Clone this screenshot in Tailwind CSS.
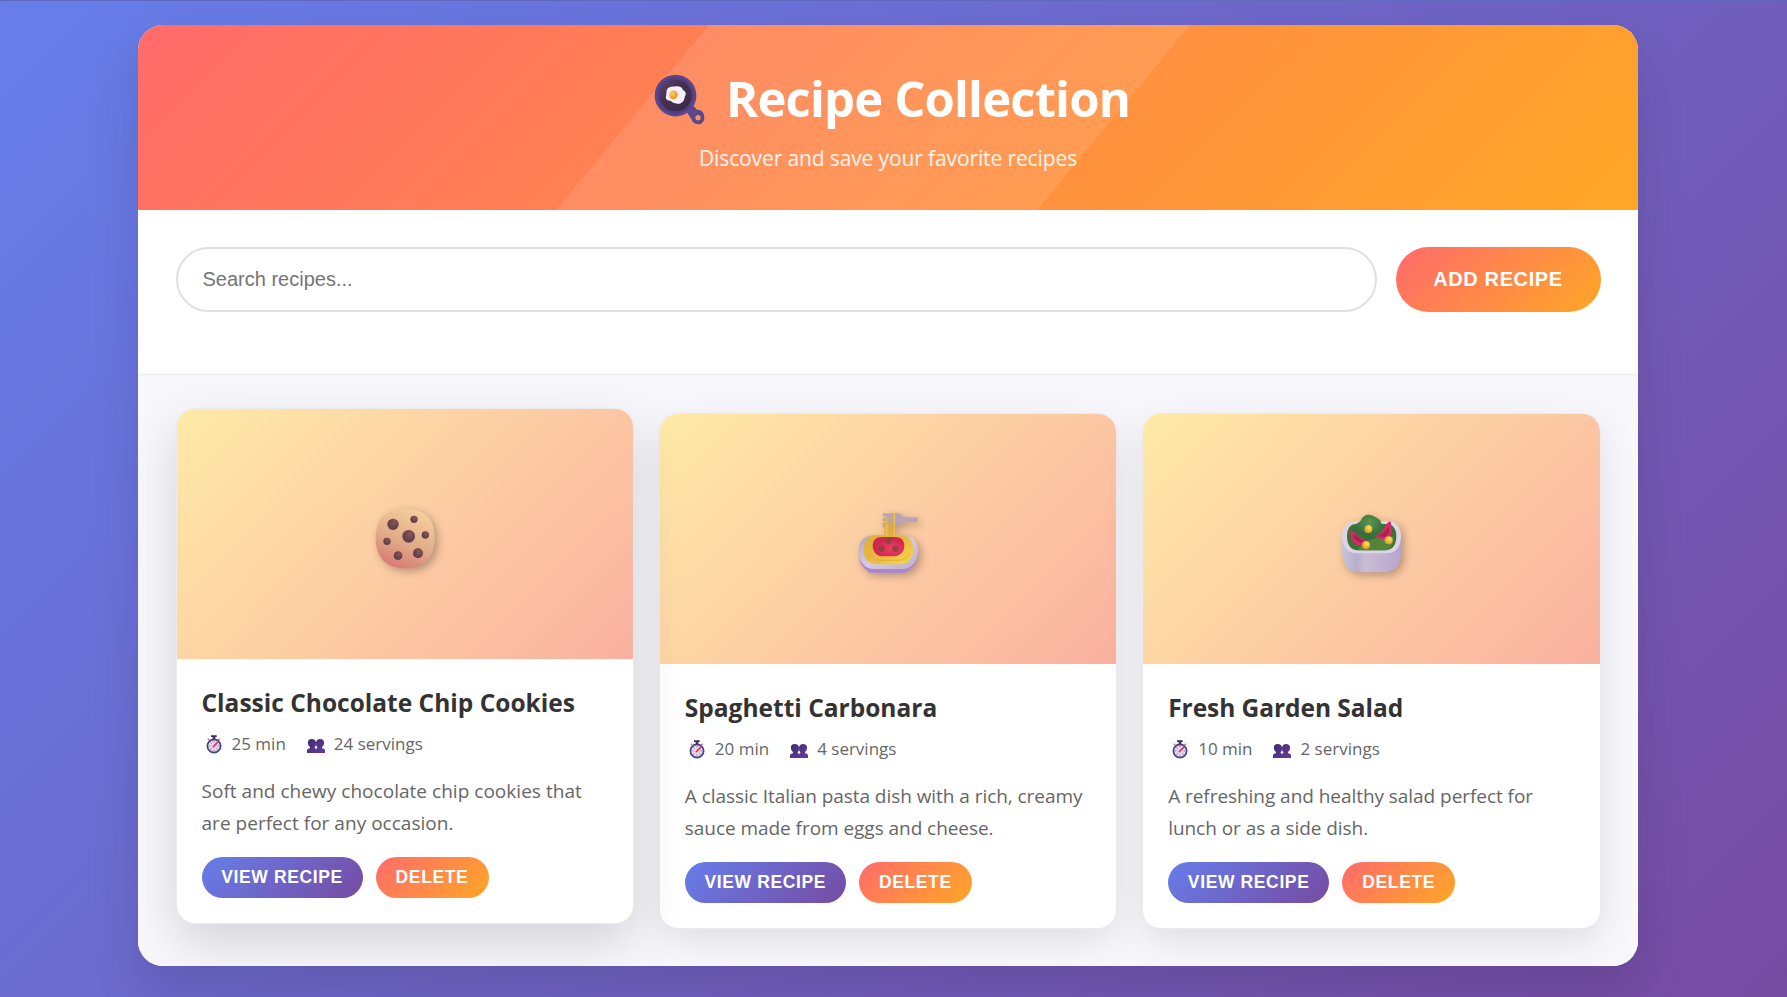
<!DOCTYPE html>
<html lang="en">
<head>
<meta charset="utf-8">
<title>Recipe Collection</title>
<script src="https://cdn.jsdelivr.net/npm/@tailwindcss/browser@4"></script>
</head>
<body class="h-[997px] overflow-hidden border-t border-[#6068c0] bg-[linear-gradient(135deg,#667eea_0%,#764ba2_100%)] font-['Open_Sans','Noto_Sans',sans-serif]">
<svg class="absolute size-0" aria-hidden="true">
  <defs>
    <linearGradient id="dial" x1="0" y1="0" x2="0" y2="1"><stop offset="0" stop-color="#5b3477"/><stop offset="1" stop-color="#3c4a86"/></linearGradient>
    <linearGradient id="body" x1="0" y1="0" x2="1" y2="1"><stop offset="0" stop-color="#3f2a6e"/><stop offset="1" stop-color="#673c9c"/></linearGradient>
    <symbol id="timer" viewBox="0 0 48 57">
      <path d="M15 1h17v5h-4v7h-8V6h-5z" fill="#3f2a66"/>
      <path d="M5 11l5 4M42 11l-5 4" stroke="#8d86a5" stroke-width="4"/>
      <circle cx="24" cy="33" r="20" fill="#e3d8ec" stroke="url(#dial)" stroke-width="5"/>
      <path d="M24 17v5M24 44v5M8 33h5M35 33h5M13 22l4 4M13 44l4-4M35 44l-4-4" stroke="#8f82a8" stroke-width="3"/>
      <path d="M22 35L34 23" stroke="#e8335f" stroke-width="5" stroke-linecap="round"/>
    </symbol>
    <symbol id="people" viewBox="0 0 54 42">
      <path d="M0 42v-7c0-5 4-6 9-7v-4C4 20 2 15 3 8c1-5 4-8 11-8s11 3 12 8h2c1-5 5-8 11-8s11 3 12 8c1 7-1 12-6 16v4c6 1 9 3 9 7v7z" fill="url(#body)"/>
      <path d="M27 10c1 6 0 11-4 15v2c2 1 3 2 4 4 1-2 2-3 4-4v-2c-4-4-5-9-4-15z" fill="#fff"/>
    </symbol>
  </defs>
</svg>
<main class="ml-[138px] mt-6 h-[941px] w-[1500px] overflow-hidden rounded-[25px] bg-white shadow-[0_25px_50px_rgba(0,0,0,0.12)]">
  <header class="relative h-[185px] bg-[linear-gradient(135deg,#ff6b6b_0%,#ffa726_100%)] text-white">
    <div class="absolute inset-0 bg-white/10 [clip-path:polygon(571px_0,1052px_0,899px_100%,418px_100%)]"></div>
    <div class="relative flex flex-col items-center pt-10">
      <h1 class="flex h-[67px] items-center gap-[21px] pl-[8px] text-[49px] font-bold tracking-[-0.85px]">
        <svg class="mt-0.5 size-[51px]" viewBox="40 42 154 154">
          <defs><linearGradient id="pan" x1="0" y1="0" x2="1" y2="1"><stop offset="0" stop-color="#5d4a68"/><stop offset=".4" stop-color="#43314f"/><stop offset="1" stop-color="#3a2a48"/></linearGradient>
          <radialGradient id="yolk" cx=".35" cy=".35"><stop offset="0" stop-color="#ffd25e"/><stop offset="1" stop-color="#eda02c"/></radialGradient></defs>
          <path d="M136 152l22-16 12 14c14-2 22 10 22 23s-8 21-19 21-17-6-20-15z" fill="#5b478c"/>
          <circle cx="173" cy="174" r="8" fill="#ff9257"/>
          <circle cx="105" cy="107" r="63" fill="#5b478c"/>
          <circle cx="105" cy="107" r="55" fill="#503e80"/>
          <circle cx="105" cy="107" r="48" fill="url(#pan)"/>
          <path d="M78 92c2-9 12-13 24-12 14-3 24 2 25 10 10 4 11 14 6 20-1 8-3 14-6 15-4 6-13 9-20 6-9 0-13-5-18-8-13-2-15-8-12-17z" fill="#f8efff"/>
          <circle cx="99" cy="105" r="13" fill="url(#yolk)"/>
        </svg>
        <span>Recipe Collection</span>
      </h1>
      <p class="mt-[11px] h-[30px] text-[21px] leading-[30px] tracking-[-0.12px] text-white/90">Discover and save your favorite recipes</p>
    </div>
  </header>
  <section class="flex h-[165px] items-start gap-[19px] border-b border-[#eeeeee] px-[37.5px] pt-[37px] font-['Liberation_Sans',Arial,sans-serif]">
    <input type="text" placeholder="Search recipes..." class="h-[65px] min-w-0 flex-1 rounded-full border-2 border-[#e0e0e0] px-[25px] text-xl text-[#757575] placeholder:text-[#757575]">
    <button class="h-[65px] w-[205px] rounded-full bg-[linear-gradient(135deg,#ff6b6b_0%,#ffa726_100%)] pb-0.5 text-xl font-bold tracking-[0.625px] text-white">ADD RECIPE</button>
  </section>
  <section class="grid h-[591px] grid-cols-3 items-start gap-[25px] bg-[#f8f7fc] px-[37.5px] pt-[38px]">
    <article class="h-[516px] -translate-y-[5px] overflow-hidden rounded-[19px] border border-[#ebebee] bg-white shadow-[0_19px_50px_rgba(0,0,0,0.15)]">
      <div class="flex h-[250px] items-center justify-center bg-[linear-gradient(135deg,#ffeaa7_0%,#fab1a0_100%)]">
        <svg class="size-[90px] drop-shadow-[3px_3px_4px_rgba(0,0,0,0.28)]" viewBox="-2 -5 270 270">
          <defs><linearGradient id="ck" x1=".7" y1="0" x2=".3" y2="1"><stop offset="0" stop-color="#f6d09d"/><stop offset=".6" stop-color="#dfa886"/><stop offset="1" stop-color="#d97774"/></linearGradient>
          <radialGradient id="chip" cx=".6" cy=".35"><stop offset="0" stop-color="#87575b"/><stop offset="1" stop-color="#63404a"/></radialGradient></defs>
          <path d="M134 54c58 0 88 30 88 88s-30 91-88 91-89-33-89-91 31-88 89-88z" fill="url(#ck)"/>
          <g fill="url(#chip)"><circle cx="97" cy="101" r="17"/><circle cx="160" cy="86" r="11"/><circle cx="144" cy="137" r="19"/><circle cx="194" cy="133" r="11"/><circle cx="79" cy="152" r="11"/><circle cx="112" cy="195" r="13"/><circle cx="172" cy="188" r="15"/></g>
        </svg>
      </div>
      <div class="px-[25px] pt-[27px]">
        <h2 class="h-[34px] text-[24.5px] leading-[34px] font-bold text-[#333]">Classic Chocolate Chip Cookies</h2>
        <div class="mt-3 flex h-6 items-center text-[17px] leading-6 text-[#666]"><svg class="ml-1 mr-2.5 h-[19px] w-4"><use href="#timer"/></svg><span>25 min</span><svg class="mt-1 ml-[21px] mr-[9px] h-[14px] w-[18px]"><use href="#people"/></svg><span>24 servings</span></div>
        <p class="mt-[19px] text-[19px] leading-8 tracking-[0.03px] text-[#666]">Soft and chewy chocolate chip cookies that<br>are perfect for any occasion.</p>
        <div class="mt-[18px] flex gap-[13px] font-['Liberation_Sans',Arial,sans-serif] text-[17.5px] font-bold tracking-[0.625px] text-white"><button class="h-[41px] w-[161px] rounded-full bg-[linear-gradient(135deg,#667eea_0%,#764ba2_100%)] pb-px">VIEW RECIPE</button><button class="h-[41px] w-[113px] rounded-full bg-[linear-gradient(135deg,#ff6b6b_0%,#ffa726_100%)] pb-px">DELETE</button></div>
      </div>
    </article>
    <article class="h-[516px] overflow-hidden rounded-[19px] border border-[#ebebee] bg-white shadow-[0_12px_37px_rgba(0,0,0,0.1)]">
      <div class="flex h-[250px] items-center justify-center bg-[linear-gradient(135deg,#ffeaa7_0%,#fab1a0_100%)]">
        <svg class="size-[90px] drop-shadow-[3px_3px_4px_rgba(0,0,0,0.28)]" viewBox="8 -4 270 270">
          <defs><linearGradient id="plate" x1="0" y1="0" x2="1" y2="1"><stop offset="0" stop-color="#b3a5bb"/><stop offset=".5" stop-color="#d9c9de"/><stop offset="1" stop-color="#bfb0c9"/></linearGradient>
          <linearGradient id="pasta" x1="0" y1="0" x2="1" y2="1"><stop offset="0" stop-color="#dfae36"/><stop offset=".5" stop-color="#e9b942"/><stop offset="1" stop-color="#f6db48"/></linearGradient>
          <radialGradient id="sauce" cx=".6" cy=".6"><stop offset="0" stop-color="#ef3e68"/><stop offset="1" stop-color="#cf2750"/></radialGradient></defs>
          <path d="M127 54h47c8 0 10 11 20 12h38v14h-36c-10 2-12 9-24 10h-34l-6 6h-5v-14h11v-5h-11v-9h11v-5h-11z" fill="#b6a4ba"/>
          <path d="M56 170c0 35 5 40 28 59 2 2 6 3 9 3h98c4 0 7-2 10-4 24-19 31-25 31-58z" fill="#a985d2"/>
          <path d="M101 120h84c29 0 48 18 48 44 0 38-21 57-48 57H99c-24 0-45-21-45-54 0-29 18-47 47-47z" fill="url(#plate)"/>
          <path d="M108 120h76c23 0 34 20 34 42 0 30-17 45-39 45h-66c-26 0-43-15-43-43 0-26 14-44 38-44z" fill="url(#pasta)"/>
          <path d="M84 173c7 15 18 22 38 22h48c18 0 33-8 38-22" fill="none" stroke="#dca638" stroke-width="2"/>
          <path d="M136 66v56M148 80v44M160 54v68" stroke="#e5ac2c" stroke-width="7"/>
          <path d="M138 66v56M162 54v68" stroke="#f6d44d" stroke-width="2"/>
          <path d="M97 151c0-16 11-26 27-26h40c18 0 28 10 28 27 0 20-17 31-35 31h-28c-19 0-32-13-32-32z" fill="url(#sauce)"/>
          <g fill="#91413f"><circle cx="145" cy="136" r="9"/><circle cx="124" cy="160" r="9"/><circle cx="165" cy="160" r="9"/></g>
        </svg>
      </div>
      <div class="px-[25px] pt-[27px]">
        <h2 class="h-[34px] text-[24.5px] leading-[34px] font-bold text-[#333]">Spaghetti Carbonara</h2>
        <div class="mt-3 flex h-6 items-center text-[17px] leading-6 text-[#666]"><svg class="ml-1 mr-2.5 h-[19px] w-4"><use href="#timer"/></svg><span>20 min</span><svg class="mt-1 ml-[21px] mr-[9px] h-[14px] w-[18px]"><use href="#people"/></svg><span>4 servings</span></div>
        <p class="mt-[19px] text-[19px] leading-8 tracking-[-0.05px] text-[#666]">A classic Italian pasta dish with a rich, creamy<br>sauce made from eggs and cheese.</p>
        <div class="mt-[18px] flex gap-[13px] font-['Liberation_Sans',Arial,sans-serif] text-[17.5px] font-bold tracking-[0.625px] text-white"><button class="h-[41px] w-[161px] rounded-full bg-[linear-gradient(135deg,#667eea_0%,#764ba2_100%)] pb-px">VIEW RECIPE</button><button class="h-[41px] w-[113px] rounded-full bg-[linear-gradient(135deg,#ff6b6b_0%,#ffa726_100%)] pb-px">DELETE</button></div>
      </div>
    </article>
    <article class="h-[516px] overflow-hidden rounded-[19px] border border-[#ebebee] bg-white shadow-[0_12px_37px_rgba(0,0,0,0.1)]">
      <div class="flex h-[250px] items-center justify-center bg-[linear-gradient(135deg,#ffeaa7_0%,#fab1a0_100%)]">
        <svg class="size-[90px] drop-shadow-[3px_3px_4px_rgba(0,0,0,0.28)]" viewBox="3 -19 270 270">
          <defs><linearGradient id="bowl" x1="0" y1="0" x2="1" y2="0"><stop offset="0" stop-color="#c8c2d5"/><stop offset=".25" stop-color="#b9afcc"/><stop offset=".4" stop-color="#c8bdd4"/><stop offset="1" stop-color="#b8a5cf"/></linearGradient>
          <radialGradient id="leaf" cx=".6" cy=".3"><stop offset="0" stop-color="#5c9450"/><stop offset="1" stop-color="#34703c"/></radialGradient>
          <radialGradient id="corn" cx=".6" cy=".35"><stop offset="0" stop-color="#ffe45e"/><stop offset="1" stop-color="#e3a72e"/></radialGradient></defs>
          <path d="M51 108v47c0 40 20 61 56 61h66c36 0 55-19 55-61v-47z" fill="url(#bowl)"/>
          <path d="M92 62h96c24 0 40 18 40 44 0 32-15 53-43 53H94c-27 0-43-21-43-51 0-28 17-46 41-46z" fill="#ddd5e6"/>
          <path d="M94 71h92c18 0 28 15 28 36 0 27-12 43-34 43h-82c-21 0-32-17-32-43 0-22 10-36 28-36z" fill="#3f7036"/>
          <path d="M78 91c2-15 18-20 29-30 8-20 28-22 45-10 12 5 20 16 19 29l-5 32-44 6z" fill="url(#leaf)"/>
          <path d="M105 140c8-22 28-17 48-28 20 7 36-2 53-5 5 18-6 38-24 43H99z" fill="#54843b"/>
          <path d="M196 62c8 24 7 45-11 53-12 3-27 0-34-7 12-7 18-13 25-23 7-11 10-19 20-23z" fill="#d52a68"/>
          <path d="M192 79c2 16-3 28-13 30-7 1-14 0-19-2 13-5 20-14 32-28z" fill="#a82149"/>
          <path d="M77 89c-5 23 7 43 29 47 12 3 24-4 29-14-16 0-22-9-32-12-10-8-16-18-26-21z" fill="#d52a68"/>
          <path d="M84 102c2 12 10 21 24 24 7 2 11 0 14-2-15-3-22-16-38-22z" fill="#a82149"/>
          <g fill="url(#corn)"><circle cx="130" cy="86" r="12"/><circle cx="123" cy="134" r="12"/><circle cx="191" cy="120" r="12"/></g>
        </svg>
      </div>
      <div class="px-[25px] pt-[27px]">
        <h2 class="h-[34px] text-[24.5px] leading-[34px] font-bold tracking-[-0.05px] text-[#333]">Fresh Garden Salad</h2>
        <div class="mt-3 flex h-6 items-center text-[17px] leading-6 text-[#666]"><svg class="ml-1 mr-2.5 h-[19px] w-4"><use href="#timer"/></svg><span>10 min</span><svg class="mt-1 ml-[21px] mr-[9px] h-[14px] w-[18px]"><use href="#people"/></svg><span>2 servings</span></div>
        <p class="mt-[19px] text-[19px] leading-8 tracking-[-0.05px] text-[#666]">A refreshing and healthy salad perfect for<br>lunch or as a side dish.</p>
        <div class="mt-[18px] flex gap-[13px] font-['Liberation_Sans',Arial,sans-serif] text-[17.5px] font-bold tracking-[0.625px] text-white"><button class="h-[41px] w-[161px] rounded-full bg-[linear-gradient(135deg,#667eea_0%,#764ba2_100%)] pb-px">VIEW RECIPE</button><button class="h-[41px] w-[113px] rounded-full bg-[linear-gradient(135deg,#ff6b6b_0%,#ffa726_100%)] pb-px">DELETE</button></div>
      </div>
    </article>
  </section>
</main>
</body>
</html>
